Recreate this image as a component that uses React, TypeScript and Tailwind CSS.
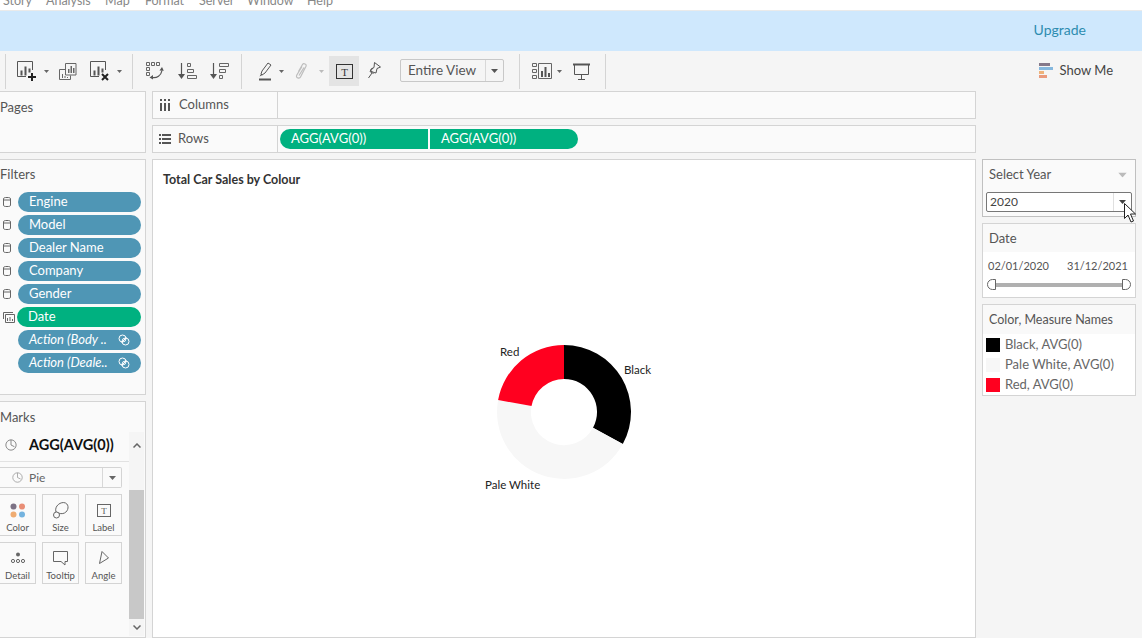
import React from "react";

const FONT = { fontFamily: "Lato, 'Open Sans', sans-serif" };

const menus = [
  ["Story", "w-[43px]"],
  ["Analysis", "w-[59px]"],
  ["Map", "w-[40px]"],
  ["Format", "w-[54px]"],
  ["Server", "w-[48px]"],
  ["Window", "w-[60px]"],
  ["Help", "w-[40px]"],
];

// Маленькая стрелка выпадающего списка
function Caret({ className = "" }: { className?: string }) {
  return (
    <svg width="7" height="4" viewBox="0 0 7 4" className={`shrink-0 ${className}`}>
      <path d="M0 0h7L3.500 4z" fill="currentColor" />
    </svg>
  );
}

function Sep({ className = "" }: { className?: string }) {
  return <div className={`w-px h-[35px] bg-[#d4d4d4] shrink-0 ${className}`} />;
}

function BarsAdd({ mark }: { mark: "plus" | "x" }) {
  return (
    <svg width="20" height="20" viewBox="0 0 20 20" className="shrink-0">
      <path d="M15.500 9V.500H.500v15H9" fill="none" stroke="#555" />
      <path d="M3.500 9.500h2v5h-2zM7.500 5.500h2v9h-2zM11.500 7.500h2v4h-2z" fill="#555" />
      {mark === "plus" ? (
        <path d="M11 16h8M15 12v8" stroke="#222" strokeWidth="2" />
      ) : (
        <path d="M12 13l6 6M18 13l-6 6" stroke="#222" strokeWidth="2" />
      )}
    </svg>
  );
}

function Duplicate() {
  return (
    <svg width="18" height="17" viewBox="0 0 18 17" className="shrink-0">
      <path d="M6.500 6.500h-6v10h11v-4" fill="none" stroke="#666" />
      <path d="M6.500 .500h10.500v11.500H6.500z" fill="#f5f5f5" stroke="#666" />
      <path d="M9 6h1.500v4H9zM11.500 3h1.500v7h-1.500zM14 5h1.500v5H14zM3 11h1v4H3zM5.500 13h1v2h-1zM8 14h1v1H8z" fill="#666" />
    </svg>
  );
}

function Swap() {
  return (
    <svg width="18" height="18" viewBox="0 0 18 18" className="shrink-0">
      <path d="M.500.500h3v3h-3zM5.500.500h3v3h-3zM10.500.500h3v3h-3zM.500 5.500h3v3h-3zM.500 10.500h3v3h-3z" fill="none" stroke="#666" />
      <path d="M6 15.500c5 1 9-2 10-7" fill="none" stroke="#555" strokeWidth="1.200" />
      <path d="M13.500 8.500l2.500-3.500 1.800 3.800zM7 13l-3.500 2.500 3.500 2z" fill="#555" />
    </svg>
  );
}

function Sort({ desc }: { desc?: boolean }) {
  return (
    <svg width="19" height="18" viewBox="0 0 19 18" className="shrink-0">
      <path d="M3.500 1v14" stroke="#555" strokeWidth="1.200" />
      <path d="M0 12h7l-3.500 5z" fill="#555" />
      {desc ? (
        <path d="M9.500 1.500h9v3h-9zM9.500 7.500h6v3h-6zM9.500 13.500h3v3h-3z" fill="none" stroke="#666" />
      ) : (
        <path d="M9.500 1.500h3v3h-3zM9.500 7.500h6v3h-6zM9.500 13.500h9v3h-9z" fill="none" stroke="#666" />
      )}
    </svg>
  );
}

function Highlight() {
  return (
    <svg width="14" height="19" viewBox="0 0 14 19" className="shrink-0">
      <path d="M3 12l1-3 6-8 3 2-6 8-3 2z" fill="none" stroke="#555" />
      <path d="M1.500 14.500l1.500-2.500 1.500 1z" fill="#555" />
      <path d="M1 17.500h12" stroke="#555" strokeWidth="2" />
    </svg>
  );
}

function Clip() {
  return (
    <svg width="13" height="19" viewBox="0 0 13 19" className="shrink-0">
      <path d="M3.500 9.500l4-7c1-1.600 4.500-.5 3.500 1.800L5.500 15c-1 2-5 1-3.800-1.800L7 4.500M9 5.500l-5 8" fill="none" stroke="#bdbdbd" strokeWidth="1.200" />
    </svg>
  );
}

function Pin() {
  return (
    <svg width="14" height="18" viewBox="0 0 14 18" className="shrink-0">
      <path d="M7.500.500l6 4.500-3.500 1.500-1 4.500-2-.5L3.500 9l.5-2 3-1.500zM5 11l-3.500 5" fill="none" stroke="#555" />
      <path d="M6 6l-3 3.500 3.500 2" fill="none" stroke="#555" />
    </svg>
  );
}

function ShowCards() {
  return (
    <svg width="20" height="16" viewBox="0 0 20 16" className="shrink-0">
      <path d="M.500.500h4v3h-4zM.500 6.500h4v3h-4zM.500 12.500h4v3h-4zM6.500.500h13v15h-13z" fill="none" stroke="#666" />
      <path d="M9 8h2v6H9zM12.500 4h2v10h-2zM16 10h2v4h-2z" fill="#555" />
    </svg>
  );
}

function Present() {
  return (
    <svg width="18" height="17" viewBox="0 0 18 17" className="shrink-0">
      <path d="M0 1.500h17" stroke="#555" strokeWidth="2" />
      <path d="M1.500 2v9.500h14V2M8.500 11.500v4.500M5 16.500h7" fill="none" stroke="#555" />
    </svg>
  );
}

function ShowMeIcon() {
  return (
    <svg width="15" height="16" viewBox="0 0 15 16" className="shrink-0">
      <rect x="0" y="0" width="11" height="3" fill="#85798a" />
      <rect x="0" y="4" width="14" height="3" fill="#85b8de" />
      <rect x="0" y="8" width="5" height="3" fill="#eeb27a" />
      <rect x="0" y="12" width="8" height="3" fill="#ea9a7c" />
    </svg>
  );
}

function Cylinder() {
  return (
    <svg width="8" height="10" viewBox="0 0 8 10" className="shrink-0">
      <path d="M.500 2C.500.500 2 .500 4 .500S7.500.500 7.500 2v6C7.500 9.500 6 9.500 4 9.500S.500 9.500.500 8zM.500 3h7" fill="none" stroke="#666" />
    </svg>
  );
}

function DateFilterIcon() {
  return (
    <svg width="12" height="11" viewBox="0 0 12 11" className="shrink-0">
      <path d="M.500 7V.500H10M2.500 9V2.500H11.500v8h-9z" fill="none" stroke="#666" />
      <path d="M4 6h1v3H4zM6.500 5h1v4h-1zM9 7h1v2H9z" fill="#666" />
    </svg>
  );
}

function Link() {
  return (
    <svg width="12" height="12" viewBox="0 0 12 12" className="shrink-0">
      <circle cx="4.500" cy="4.500" r="3.500" fill="none" stroke="#fff" />
      <circle cx="7.500" cy="7.500" r="3.500" fill="none" stroke="#fff" />
      <path d="M3.500 8.500l5-5" stroke="#fff" />
    </svg>
  );
}

function PieIcon({ size = 14, color = "#777" }: { size?: number; color?: string }) {
  return (
    <svg width={size} height={size} viewBox="0 0 14 14" className="shrink-0">
      <circle cx="7" cy="7" r="6" fill="none" stroke={color} />
      <path d="M7 7V1M7 7l4 2" stroke={color} fill="none" />
    </svg>
  );
}

const filters = ["Engine", "Model", "Dealer Name", "Company", "Gender"];

function Pill({ children, green, className = "" }: { children: React.ReactNode; green?: boolean; className?: string }) {
  return (
    <div
      className={`h-5 w-[123px] rounded-full flex items-center pl-[11px] text-white text-[13px] ${
        green ? "bg-[#00b180]" : "bg-[#4f96b5]"
      } ${className}`}
    >
      {children}
    </div>
  );
}

function FilterRow({ icon, children }: { icon: React.ReactNode; children: React.ReactNode }) {
  return (
    <div className="flex items-center h-5">
      <div className="w-[18px] pl-[3px] shrink-0 flex justify-start">{icon}</div>
      {children}
    </div>
  );
}

function MarkButton({ label, icon }: { label: string; icon: React.ReactNode }) {
  return (
    <div className="h-[42px] border border-[#d4d4d4] bg-[#fafafa] flex flex-col items-center pt-[5px]">
      <div className="h-[20px] flex items-center">{icon}</div>
      <div className="text-[9.5px] leading-[12px] mt-[2px] text-[#555]">{label}</div>
    </div>
  );
}

function ColorDots() {
  return (
    <svg width="16" height="15" viewBox="0 0 16 15">
      <circle cx="3.500" cy="3.500" r="3" fill="#7d7285" />
      <circle cx="12" cy="3.500" r="3" fill="#e98e76" />
      <circle cx="3.500" cy="11.500" r="3" fill="#efac72" />
      <circle cx="12" cy="11.500" r="3" fill="#74b3df" />
    </svg>
  );
}

function SizeIcon() {
  return (
    <svg width="16" height="18" viewBox="0 0 16 18">
      <path d="M3 11C1 5 8 0 12.500 2c4 2 3 8-1 10-2 1-5 1-8.500-1z" fill="none" stroke="#666" />
      <circle cx="3.500" cy="14" r="3" fill="#fafafa" stroke="#666" />
    </svg>
  );
}

function LabelIcon() {
  return (
    <svg width="14" height="13" viewBox="0 0 14 13">
      <rect x=".500" y=".500" width="13" height="12" fill="none" stroke="#666" />
      <text x="7" y="10" textAnchor="middle" fontSize="9" fontFamily="'Liberation Serif', serif" fill="#555">
        T
      </text>
    </svg>
  );
}

function DetailIcon() {
  return (
    <svg width="14" height="12" viewBox="0 0 14 12">
      <circle cx="7" cy="2.500" r="2" fill="#666" />
      <circle cx="2" cy="9" r="1.600" fill="none" stroke="#666" />
      <circle cx="7" cy="9" r="1.600" fill="none" stroke="#666" />
      <circle cx="12" cy="9" r="1.600" fill="none" stroke="#666" />
    </svg>
  );
}

function TooltipIcon() {
  return (
    <svg width="15" height="15" viewBox="0 0 15 15">
      <path d="M.500.500h14v10h-2.500v3.500l-4-3.500H.500z" fill="none" stroke="#666" />
    </svg>
  );
}

function AngleIcon() {
  return (
    <svg width="11" height="14" viewBox="0 0 11 14">
      <path d="M4 .500l6.500 6.500-9 5.500z" fill="none" stroke="#666" />
    </svg>
  );
}

function Chev({ up }: { up?: boolean }) {
  return (
    <svg width="8" height="5" viewBox="0 0 8 5">
      <path d={up ? "M.500 4.500L4 1l3.500 3.500" : "M.500.500L4 4 7.500.500"} fill="none" stroke="#666" strokeWidth="1.500" />
    </svg>
  );
}

function CursorArrow() {
  return (
    <svg width="14" height="20" viewBox="0 0 14 20" className="absolute left-[1123px] top-[203px]">
      <path d="M1.500.500v15l3.500-3.500 3 7 2.500-1-3-7h5z" fill="#fff" stroke="#222" />
    </svg>
  );
}

function Donut() {
  return (
    <svg width="180" height="170" viewBox="0 0 180 170" className="ml-[327px] mt-[148px] shrink-0">
      <path d="M84 10A67 67 0 0 1 142.800 109.100L113 92.800A33 33 0 0 0 84 44Z" fill="#000" />
      <path d="M142.800 109.100A67 67 0 0 1 18.100 65L51.500 71.100A33 33 0 0 0 113 92.800Z" fill="#f7f7f7" />
      <path d="M18.100 65A67 67 0 0 1 84 10L84 44A33 33 0 0 0 51.500 71.100Z" fill="#ff001f" />
      <g fontSize="11.500" fill="#222" fontFamily="Lato, sans-serif">
        <text x="20" y="21">Red</text>
        <text x="144" y="39">Black</text>
        <text x="5" y="154">Pale White</text>
      </g>
    </svg>
  );
}

export default function App() {
  return (
    <div className="relative w-[1142px] h-[638px] overflow-hidden bg-[#f5f5f5] text-[#555]" style={FONT}>
      {/* меню, обрезанное сверху */}
      <div className="h-[11px] bg-white overflow-hidden flex items-end pl-[3px] text-[12.500px] leading-[16px] text-[#888] border-b border-[#eaeaea]">
        {menus.map(([name, w]) => (
          <div key={name} className={`${w} shrink-0 -translate-y-px`}>
            {name}
          </div>
        ))}
      </div>

      <div className="h-10 bg-[#cfe8fd] flex items-center justify-end pr-[56px] pb-[3px] text-[14px] text-[#2d8cb0]">Upgrade</div>

      {/* панель инструментов */}
      <div className="h-10 flex items-center text-[#666]">
        <Sep className="ml-[5px]" />
        <div className="ml-[11px]"><BarsAdd mark="plus" /></div>
        <Caret className="ml-[7px] w-[5px] h-[3px]" />
        <div className="ml-[10px]"><Duplicate /></div>
        <div className="ml-[13px]"><BarsAdd mark="x" /></div>
        <Caret className="ml-[7px] w-[5px] h-[3px]" />
        <Sep className="ml-[10px]" />
        <div className="ml-[13px]"><Swap /></div>
        <div className="ml-[14px]"><Sort /></div>
        <div className="ml-[13px]"><Sort desc /></div>
        <Sep className="ml-[12px]" />
        <div className="ml-[16px]"><Highlight /></div>
        <Caret className="ml-[7px] w-[5px] h-[3px]" />
        <div className="ml-[11px]"><Clip /></div>
        <Caret className="ml-[11px] w-[5px] h-[3px] text-[#bbb]" />
        <div className="ml-[5px] w-[30px] h-[30px] bg-[#e4e4e4] flex items-center justify-center">
          <svg width="17" height="15" viewBox="0 0 17 15">
            <rect x=".500" y=".500" width="16" height="14" fill="none" stroke="#333" />
            <text x="8.500" y="11.500" textAnchor="middle" fontSize="11" fontFamily="'Liberation Serif', serif" fill="#333">
              T
            </text>
          </svg>
        </div>
        <div className="ml-[8px]"><Pin /></div>
        <div className="ml-[19px] -mt-px w-[104px] h-[23px] border border-[#c8c8c8] rounded-[2px] flex items-center text-[13.500px] text-[#555]">
          <div className="flex-1 pl-[7px] pb-px border-r border-[#d8d8d8] h-full flex items-center">Entire View</div>
          <div className="w-[17px] flex justify-center"><Caret /></div>
        </div>
        <Sep className="ml-[15px]" />
        <div className="ml-[12px]"><ShowCards /></div>
        <Caret className="ml-[5px] w-[5px] h-[3px]" />
        <div className="ml-[11px]"><Present /></div>
        <Sep className="ml-[14px]" />
        <div className="ml-auto mr-[29px] pb-px flex items-center gap-[6px] text-[13px] text-[#444]">
          <ShowMeIcon />
          Show Me
        </div>
      </div>

      {/* основная область */}
      <div className="flex">
        <div className="w-[146px] shrink-0 flex flex-col">
          <div className="h-[62px] border border-l-0 border-[#d4d4d4] bg-[#fafafa] pt-[7px] text-[13px] leading-[16px]">Pages</div>

          <div className="h-[236px] mt-[6px] border border-l-0 border-[#d4d4d4] bg-[#fafafa] pt-[6px]">
            <div className="text-[13px] leading-[16px]">Filters</div>
            <div className="mt-[10px] flex flex-col gap-[3px]">
              {filters.map((f) => (
                <FilterRow key={f} icon={<Cylinder />}>
                  <Pill>{f}</Pill>
                </FilterRow>
              ))}
              <FilterRow icon={<DateFilterIcon />}>
                <Pill green className="-ml-px w-[124px]">Date</Pill>
              </FilterRow>
              <FilterRow icon={null}>
                <Pill className="italic justify-between pr-[11px] text-[13.500px]">
                  <span>Action (Body ..</span>
                  <Link />
                </Pill>
              </FilterRow>
              <FilterRow icon={null}>
                <Pill className="italic justify-between pr-[11px] text-[13.500px]">
                  <span>Action (Deale..</span>
                  <Link />
                </Pill>
              </FilterRow>
            </div>
          </div>

          <div className="h-[237px] mt-[6px] border border-l-0 border-[#d4d4d4] bg-[#fafafa] pt-[7px] flex flex-col">
            <div className="text-[13px] leading-[16px] h-[23px]">Marks</div>
            <div className="flex-1 flex min-h-0">
              <div className="w-[129px] shrink-0">
                <div className="h-[30px] pb-[3px] flex items-center border-b border-[#e2e2e2]">
                  <div className="ml-[5px]"><PieIcon size={12} /></div>
                  <div className="ml-[12px] font-bold text-[14.500px] text-[#111]">AGG(AVG(0))</div>
                </div>
                <div className="mt-[5px] w-[122px] h-[21px] border border-l-0 border-[#d4d4d4] rounded-r-[2px] flex items-center text-[12px] text-[#666]">
                  <div className="flex-1 h-full border-r border-[#d8d8d8] flex items-center pl-[12px] gap-[6px]">
                    <PieIcon size={11} color="#999" />
                    Pie
                  </div>
                  <div className="w-[18px] flex justify-center"><Caret /></div>
                </div>
                <div className="mt-[6px] -ml-px w-[123px] grid grid-cols-3 gap-x-[6px] gap-y-[6px]">
                  <MarkButton label="Color" icon={<ColorDots />} />
                  <MarkButton label="Size" icon={<SizeIcon />} />
                  <MarkButton label="Label" icon={<LabelIcon />} />
                  <MarkButton label="Detail" icon={<DetailIcon />} />
                  <MarkButton label="Tooltip" icon={<TooltipIcon />} />
                  <MarkButton label="Angle" icon={<AngleIcon />} />
                </div>
              </div>
              <div className="w-[15px] flex flex-col items-center bg-[#f0f0f0] mb-px">
                <div className="h-[26px] w-full flex items-center justify-center bg-[#f5f5f5]"><Chev up /></div>
                <div className="h-[32px] w-full bg-[#f5f5f5]" />
                <div className="flex-1 w-full bg-[#c8c8c8]" />
                <div className="h-[17px] w-full flex items-center justify-center bg-[#f5f5f5]"><Chev /></div>
              </div>
            </div>
          </div>
        </div>

        <div className="w-[824px] ml-[6px] shrink-0 flex flex-col">
          <div className="h-[28px] border border-[#d4d4d4] bg-[#fafafa] flex">
            <div className="w-[125px] border-r border-[#d4d4d4] flex items-center pl-[7px] gap-[9px] text-[13px]">
              <svg width="10" height="12" viewBox="0 0 10 12">
                <path d="M0 4h2v8H0zM4 4h2v8H4zM8 4h2v8H8zM0 0h2v2H0zM4 0h2v2H4zM8 0h2v2H8z" fill="#555" />
              </svg>
              Columns
            </div>
          </div>
          <div className="h-[28px] mt-[6px] border border-[#d4d4d4] bg-[#fafafa] flex">
            <div className="w-[125px] border-r border-[#d4d4d4] flex items-center pl-[6px] gap-[7px] text-[13px]">
              <svg width="12" height="10" viewBox="0 0 12 10">
                <path d="M0 0h2v2H0zM0 4h2v2H0zM0 8h2v2H0zM3 0h9v2H3zM3 4h9v2H3zM3 8h9v2H3z" fill="#555" />
              </svg>
              Rows
            </div>
            <div className="flex items-center pl-[2px]">
              <div className="h-5 w-[148px] rounded-l-full bg-[#00b180] text-white text-[13px] flex items-center pl-[11px]">AGG(AVG(0))</div>
              <div className="h-5 w-[148px] ml-[2px] rounded-r-full bg-[#00b180] text-white text-[13px] flex items-center pl-[11px]">AGG(AVG(0))</div>
            </div>
          </div>

          <div className="h-[479px] mt-[6px] border border-[#d4d4d4] bg-white flex flex-col">
            <div className="pl-[10px] pt-[13px] text-[12.500px] leading-[14px] font-bold text-[#333]">Total Car Sales by Colour</div>
            <Donut />
          </div>
        </div>

        <div className="w-[154px] ml-[6px] shrink-0 flex flex-col">
          <div className="mt-[68px] h-[58px] border border-[#c0c0c0] bg-[#fafafa] px-[3px]">
            <div className="h-[30px] flex items-center pl-[3px] pr-[6px] justify-between text-[13px]">
              Select Year
              <Caret className="text-[#bbb] scale-125" />
            </div>
            <div className="mt-[2px] h-[20px] border border-[#777] rounded-[2px] bg-white flex items-center text-[12px] text-[#444]">
              <div className="flex-1 pl-[3px]">2020</div>
              <div className="w-[18px] h-full border-l border-[#e0e0e0] flex items-center justify-center"><Caret /></div>
            </div>
          </div>

          <div className="mt-[6px] h-[75px] border border-[#d4d4d4] bg-white">
            <div className="h-[28px] pt-[2px] bg-[#f9f9f9] flex items-center pl-[6px] text-[13px]">Date</div>
            <div className="flex justify-between pl-[5px] pr-[7px] mt-[6px] text-[11px] leading-[15px] text-[#555]">
              <span>02/01/2020</span>
              <span>31/12/2021</span>
            </div>
            <div className="mx-[4px] mt-[6px] flex items-center">
              <div className="w-[9px] h-[11px] rounded-l-full border border-[#666] bg-white" />
              <div className="flex-1 h-[4px] bg-[#b0b0b0]" />
              <div className="w-[9px] h-[11px] rounded-r-full border border-[#666] bg-white" />
            </div>
          </div>

          <div className="mt-[6px] h-[92px] border border-[#d4d4d4] bg-white">
            <div className="h-[29px] pt-[2px] bg-[#f9f9f9] flex items-center pl-[6px] text-[12.500px] text-[#555]">Color, Measure Names</div>
            <div className="pl-[3px] pt-px flex flex-col text-[13px] text-[#666]">
              {[
                ["Black, AVG(0)", "bg-black"],
                ["Pale White, AVG(0)", "bg-[#f7f7f7]"],
                ["Red, AVG(0)", "bg-[#ff001f]"],
              ].map(([label, swatch]) => (
                <div key={label} className="h-5 flex items-center gap-[5px]">
                  <div className={`w-[14px] h-[14px] ${swatch}`} />
                  {label}
                </div>
              ))}
            </div>
          </div>
        </div>
      </div>

      <CursorArrow />
    </div>
  );
}
